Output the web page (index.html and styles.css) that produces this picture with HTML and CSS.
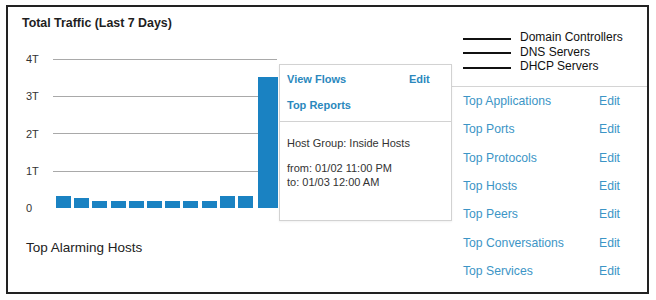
FILE: index.html
```html
<!DOCTYPE html>
<html>
<head>
<meta charset="utf-8">
<link rel="stylesheet" href="styles.css">
</head>
<body>
<div class="frame">
  <section class="left">
    <h1 class="title">Total Traffic (Last 7 Days)</h1>
    <div class="chart">
      <div class="ylabels">
        <span>4T</span><span>3T</span><span>2T</span><span>1T</span><span>0</span>
      </div>
      <div class="plot">
        <div class="bar" style="height:12px"></div>
        <div class="bar" style="height:10px"></div>
        <div class="bar" style="height:7.5px"></div>
        <div class="bar" style="height:7.5px"></div>
        <div class="bar" style="height:7.5px"></div>
        <div class="bar" style="height:7.5px"></div>
        <div class="bar" style="height:7.5px"></div>
        <div class="bar" style="height:7.5px"></div>
        <div class="bar" style="height:7.5px"></div>
        <div class="bar" style="height:12px"></div>
        <div class="bar" style="height:12px"></div>
        <div class="bar big" style="height:131px"></div>
      </div>
    </div>
    <h2 class="alarm">Top Alarming Hosts</h2>
  </section>
  <section class="right">
    <div class="legend">
      <div class="leg"><span class="line"></span><span>Domain Controllers</span></div>
      <div class="leg"><span class="line"></span><span>DNS Servers</span></div>
      <div class="leg"><span class="line"></span><span>DHCP Servers</span></div>
    </div>
    <ul class="list">
      <li><a>Top Applications</a><a>Edit</a></li>
      <li><a>Top Ports</a><a>Edit</a></li>
      <li><a>Top Protocols</a><a>Edit</a></li>
      <li><a>Top Hosts</a><a>Edit</a></li>
      <li><a>Top Peers</a><a>Edit</a></li>
      <li><a>Top Conversations</a><a>Edit</a></li>
      <li><a>Top Services</a><a>Edit</a></li>
    </ul>
  </section>
  <div class="popup">
    <div class="pop-head">
      <div class="pop-row"><a>View Flows</a><a>Edit</a></div>
      <div class="pop-row"><a>Top Reports</a></div>
    </div>
    <div class="pop-body">
      <p class="group">Host Group: Inside Hosts</p>
      <p class="range">from: 01/02 11:00 PM<br>to: 01/03 12:00 AM</p>
    </div>
  </div>
</div>
</body>
</html>
```

FILE: styles.css
```css
* { box-sizing: border-box; }
html, body { margin: 0; padding: 0; background: #fff; }
body {
  font-family: "Liberation Sans", Arial, sans-serif;
  color: #222;
  width: 656px;
  height: 300px;
  overflow: hidden;
}
.frame {
  position: relative;
  margin: 5px 0 0 6px;
  width: 643px;
  height: 289px;
  border: 2px solid #222;
  display: flex;
  background: #fff;
}
.left {
  width: 444px;
  padding: 9px 0 0 14px;
}
.title {
  margin: 0;
  font-size: 12.4px;
  font-weight: bold;
  line-height: 14px;
  color: #1e1e1e;
}
.chart {
  display: flex;
  margin: 29px 0 0 4px;
}
.ylabels {
  width: 27px;
  height: 163px;
  margin: -7px 0 -7px 0;
  display: flex;
  flex-direction: column;
  justify-content: space-between;
  font-size: 11px;
  line-height: 14px;
  color: #333;
}
.plot {
  width: 225px;
  height: 149px;
  display: flex;
  align-items: flex-end;
  gap: 3.2px;
  padding-left: 3px;
  background-image: repeating-linear-gradient(to bottom, #a9a9a9 0, #a9a9a9 1px, transparent 1px, transparent 37.25px);
  background-size: 224px 149px;
  background-repeat: no-repeat;
}
.bar {
  width: 15px;
  flex: none;
  background: #1a82c2;
}
.bar.big { width: 20px; margin-left: 1.8px; }
.alarm {
  margin: 32px 0 0 4px;
  font-size: 13.5px;
  font-weight: normal;
  line-height: 16px;
  color: #222;
}
.right {
  flex: 1;
  display: flex;
  flex-direction: column;
}
.legend {
  height: 79px;
  padding: 23px 0 0 11px;
}
.leg {
  display: flex;
  align-items: center;
  gap: 9px;
  font-size: 12px;
  line-height: 14.5px;
  color: #111;
}
.line {
  width: 48px;
  height: 2px;
  background: #111;
  margin-top: 3px;
}
.list {
  list-style: none;
  margin: 0;
  padding: 0 0 0 11px;
  border-top: 1px solid #d4d4d4;
}
.list li {
  display: grid;
  grid-template-columns: 136px auto;
  height: 28.33px;
  align-items: center;
  font-size: 12.2px;
  color: #3c95c6;
}
.popup {
  position: absolute;
  left: 271px;
  top: 57px;
  width: 173px;
  height: 157px;
  background: #fff;
  border: 1px solid #d2d2d2;
  box-shadow: 0 1px 2px rgba(0,0,0,0.06);
}
.pop-head {
  padding: 1px 0 3px 7px;
  border-bottom: 1px solid #d2d2d2;
}
.pop-row {
  display: grid;
  grid-template-columns: 122px auto;
  height: 26px;
  align-items: center;
  font-size: 11px;
  font-weight: bold;
  color: #2b88bd;
}
.pop-body {
  padding: 15px 0 0 7px;
  font-size: 11px;
  color: #333;
}
.pop-body p { margin: 0; line-height: 13px; }
.pop-body .range { margin-top: 12px; line-height: 13.5px; }
```
